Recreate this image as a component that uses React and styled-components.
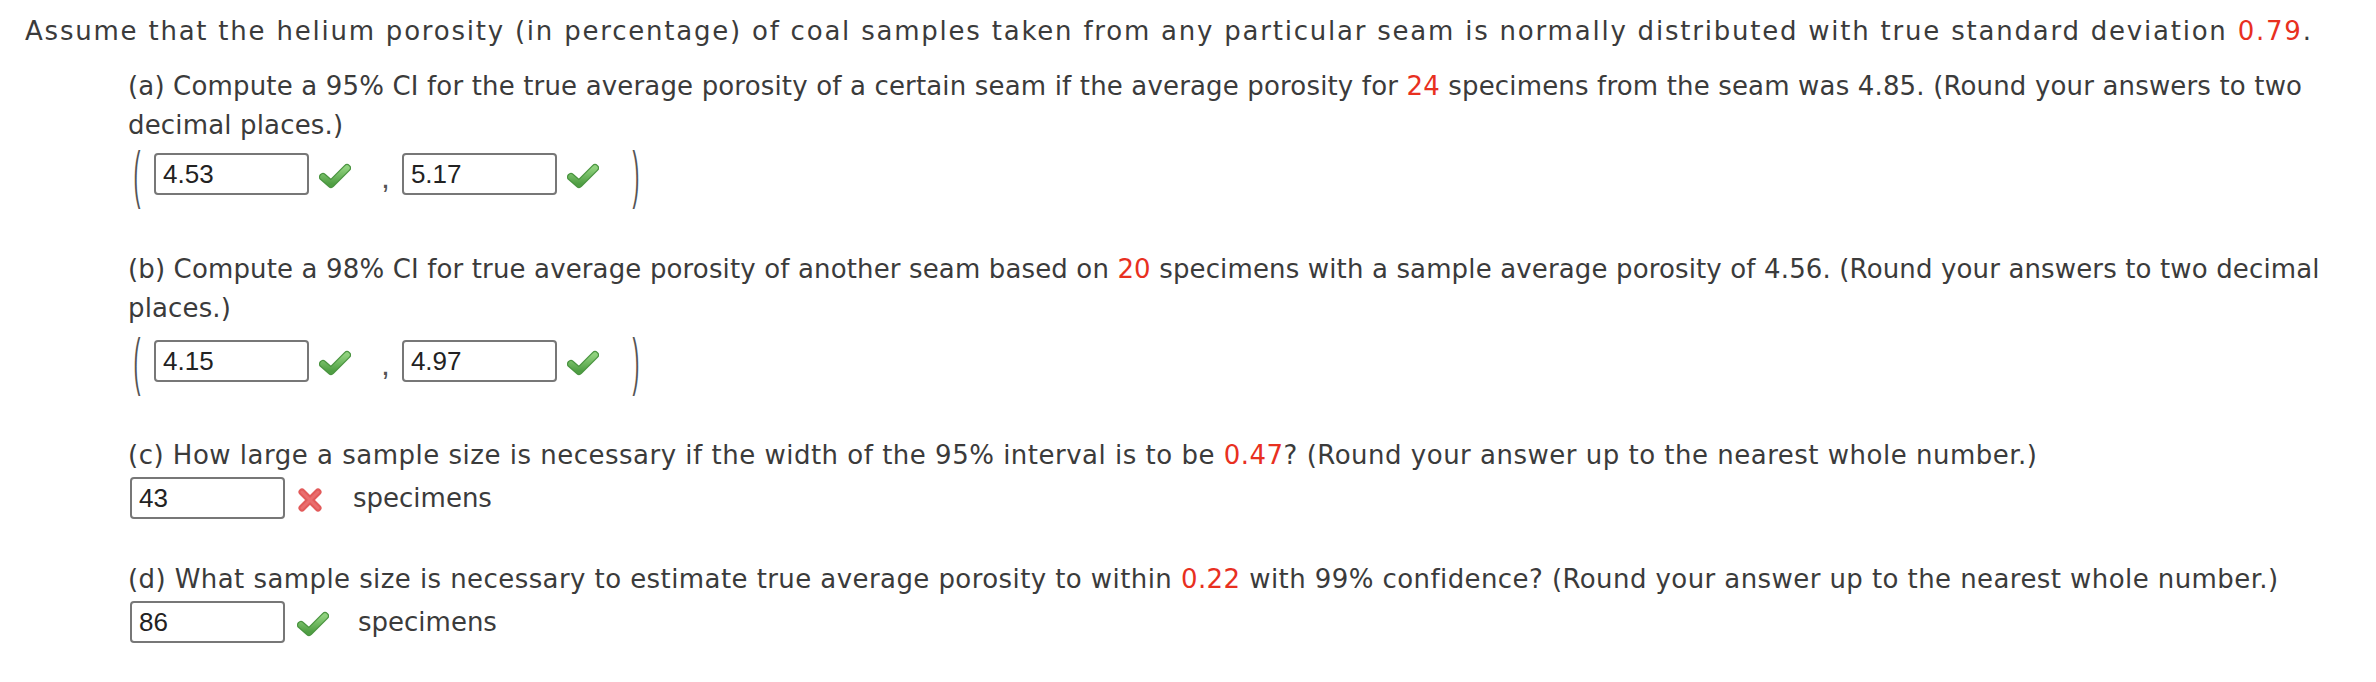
import React from "react";
import styled, { createGlobalStyle } from "styled-components";

const GlobalStyle = createGlobalStyle`
  body {
    margin: 0;
    background: #fff;
    font-family: "DejaVu Sans", Verdana, sans-serif;
    color: #3b3b3b;
  }
`;

const Page = styled.div`
  padding: 12px 0 0 25px;
  font-size: 26px;
  line-height: 39px;
`;

const Intro = styled.p`
  margin: 0;
  white-space: nowrap;
  letter-spacing: 1.78px;
`;

const Part = styled.div`
  margin: ${(p) => p.$top}px 0 0 103px;
`;

const Question = styled.p`
  margin: 0;
  white-space: nowrap;
  letter-spacing: ${(p) => p.$spacing || 0}px;
`;

const Red = styled.span`
  color: #e8301f;
`;

const AnswerRow = styled.div`
  display: flex;
  align-items: center;
  margin-top: ${(p) => p.$top}px;
  height: ${(p) => p.$height}px;
  margin-left: 2px;
`;

const Paren = styled.span`
  display: inline-block;
  width: 13px;
  font-family: "Liberation Sans", Arial, sans-serif;
  font-size: 46px;
  line-height: 58px;
  color: #555;
  transform: scale(0.45, 1.36);
  transform-origin: center;
  text-align: center;
  margin-right: ${(p) => p.$after || 0}px;
`;

const Input = styled.input`
  box-sizing: border-box;
  width: 155px;
  height: 42px;
  border: 2px solid #777;
  border-radius: 4px;
  padding: 0 0 0 7px;
  font-family: "Liberation Sans", Arial, sans-serif;
  font-size: 26px;
  color: #222;
  background: #fff;
  outline: none;
`;

const Mark = styled.span`
  display: inline-flex;
  margin: 0 ${(p) => p.$right}px 0 ${(p) => p.$left}px;
  padding-top: 4px;
`;

const Comma = styled.span`
  font-family: "Liberation Sans", Arial, sans-serif;
  font-size: 32px;
  color: #555;
  margin-right: 12px;
  padding-top: 6px;
`;

const Unit = styled.span`
  font-size: 26px;
`;

const Check = () => (
  <svg width="32" height="26" viewBox="0 0 32 26">
    <defs>
      <linearGradient id="ck" x1="0" y1="0" x2="0" y2="1">
        <stop offset="0" stopColor="#8fd17d" />
        <stop offset="1" stopColor="#4f9e43" />
      </linearGradient>
    </defs>
    <path
      d="M4 14 L12 21 L28 5"
      fill="none"
      stroke="#4a9440"
      strokeWidth="8"
      strokeLinecap="round"
      strokeLinejoin="round"
    />
    <path
      d="M4 14 L12 21 L28 5"
      fill="none"
      stroke="url(#ck)"
      strokeWidth="5.5"
      strokeLinecap="round"
      strokeLinejoin="round"
    />
  </svg>
);

const Cross = () => (
  <svg width="26" height="26" viewBox="0 0 26 26">
    <path
      d="M5 5 L21 21 M21 5 L5 21"
      fill="none"
      stroke="#e25a5a"
      strokeWidth="7"
      strokeLinecap="round"
    />
    <path
      d="M5 5 L21 21 M21 5 L5 21"
      fill="none"
      stroke="#ee7b7b"
      strokeWidth="3"
      strokeLinecap="round"
      opacity="0.6"
    />
  </svg>
);

const Interval = ({ lo, hi }) => (
  <>
    <Paren $after={11}>(</Paren>
    <Input defaultValue={lo} readOnly />
    <Mark $left={10} $right={30}>
      <Check />
    </Mark>
    <Comma>,</Comma>
    <Input defaultValue={hi} readOnly />
    <Mark $left={10} $right={30}>
      <Check />
    </Mark>
    <Paren>)</Paren>
  </>
);

export default function App() {
  return (
    <Page>
      <GlobalStyle />
      <Intro>
        Assume that the helium porosity (in percentage) of coal samples taken from any
        particular seam is normally distributed with true standard deviation{" "}
        <Red>0.79</Red>.
      </Intro>

      <Part $top={16}>
        <Question $spacing={0.16}>
          (a) Compute a 95% CI for the true average porosity of a certain seam if the
          average porosity for <Red>24</Red> specimens from the seam was 4.85. (Round
          your answers to two
          <br />
          decimal places.)
        </Question>
        <AnswerRow $top={0} $height={58}>
          <Interval lo="4.53" hi="5.17" />
        </AnswerRow>
      </Part>

      <Part $top={47}>
        <Question $spacing={0.14}>
          (b) Compute a 98% CI for true average porosity of another seam based on{" "}
          <Red>20</Red> specimens with a sample average porosity of 4.56. (Round your
          answers to two decimal
          <br />
          places.)
        </Question>
        <AnswerRow $top={4} $height={58}>
          <Interval lo="4.15" hi="4.97" />
        </AnswerRow>
      </Part>

      <Part $top={46}>
        <Question $spacing={0.5}>
          (c) How large a sample size is necessary if the width of the 95% interval is
          to be <Red>0.47</Red>? (Round your answer up to the nearest whole number.)
        </Question>
        <AnswerRow $top={2} $height={42}>
          <Input defaultValue="43" readOnly />
          <Mark $left={12} $right={30}>
            <Cross />
          </Mark>
          <Unit>specimens</Unit>
        </AnswerRow>
      </Part>

      <Part $top={41}>
        <Question $spacing={0.42}>
          (d) What sample size is necessary to estimate true average porosity to within{" "}
          <Red>0.22</Red> with 99% confidence? (Round your answer up to the nearest whole
          number.)
        </Question>
        <AnswerRow $top={2} $height={42}>
          <Input defaultValue="86" readOnly />
          <Mark $left={12} $right={29}>
            <Check />
          </Mark>
          <Unit>specimens</Unit>
        </AnswerRow>
      </Part>
    </Page>
  );
}
